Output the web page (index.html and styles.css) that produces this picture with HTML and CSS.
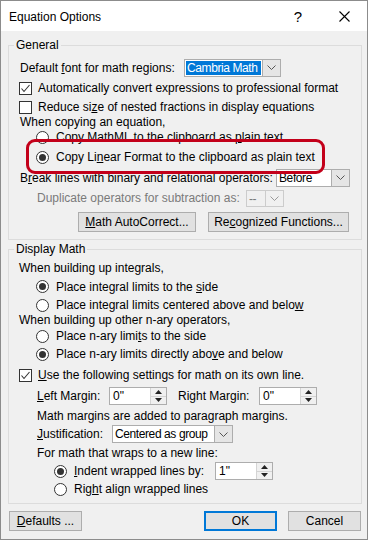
FILE: index.html
```html
<!DOCTYPE html>
<html lang="en">
<head>
    <meta charset="UTF-8">
    <title>Equation Options</title>
    <link rel="stylesheet" href="styles.css">
</head>
<body>
    <div class="dialog">
        <div class="titlebar">
            <div class="title">Equation Options</div>
            <div class="tb-btn help">?</div>
            <div class="tb-btn">
                <svg width="11" height="11" viewBox="0 0 11 11"><path d="M0.5 0.5 L10.5 10.5 M10.5 0.5 L0.5 10.5" stroke="#000" stroke-width="1.1" fill="none"/></svg>
            </div>
        </div>

        <div class="content">
            <fieldset class="group">
                <legend>General</legend>
                <div class="row h21 mt5 in11">
                    <span class="label" style="width:164px">Default <u>f</u>ont for math regions:</span>
                    <div class="combo" style="width:97px">
                        <div class="combo-value selected">Cambria Math</div>
                        <div class="combo-btn"><svg width="9" height="5" viewBox="0 0 9 5"><polyline points="0.5,0.5 4.5,4.5 8.5,0.5" fill="none" stroke="#555"/></svg></div>
                    </div>
                </div>
                <div class="row h20 in10">
                    <span class="check"><svg width="11" height="11" viewBox="0 0 11 11"><polyline points="1.5,5.5 4,8.5 9.5,2" fill="none" stroke="#333" stroke-width="1.1"/></svg></span>
                    <span>Automatically convert expressions to professional format</span>
                </div>
                <div class="row h18 in10">
                    <span class="check"></span>
                    <span>Reduce si<u>z</u>e of nested fractions in display equations</span>
                </div>
                <div class="row h12 in11">When copying an equation,</div>
                <div class="row h18 in27">
                    <span class="radio"></span>
                    <span>Copy MathML to the clipboard as <u>p</u>lain text</span>
                </div>
                <div class="row h22 in27">
                    <span class="radio on"></span>
                    <span>Copy Li<u>n</u>ear Format to the clipboard as plain text</span>
                </div>
                <div class="row h19 in11">
                    <span class="label" style="width:256px">B<u>r</u>eak lines with binary and relational operators:</span>
                    <div class="combo" style="width:74px">
                        <div class="combo-value">Before</div>
                        <div class="combo-btn"><svg width="9" height="5" viewBox="0 0 9 5"><polyline points="0.5,0.5 4.5,4.5 8.5,0.5" fill="none" stroke="#555"/></svg></div>
                    </div>
                </div>
                <div class="row h22 in28 disabled">
                    <span class="label" style="width:209px">Duplicate operators for subtraction as:</span>
                    <div class="combo off" style="width:38px">
                        <div class="combo-value">--</div>
                        <div class="combo-btn"><svg width="9" height="5" viewBox="0 0 9 5"><polyline points="0.5,0.5 4.5,4.5 8.5,0.5" fill="none" stroke="#555"/></svg></div>
                    </div>
                </div>
                <div class="row h20 mt3 buttons-row">
                    <button class="btn" style="width:118px"><u>M</u>ath AutoCorrect...</button>
                    <button class="btn" style="width:141px">Re<u>c</u>ognized Functions...</button>
                </div>
            </fieldset>

            <fieldset class="group">
                <legend>Display Math</legend>
                <div class="row h18 mt3 in10">When building up integrals,</div>
                <div class="row h19 in27">
                    <span class="radio on"></span>
                    <span>Place integral limits to the <u>s</u>ide</span>
                </div>
                <div class="row h18 in27">
                    <span class="radio"></span>
                    <span>Place integral limits centered above and belo<u>w</u></span>
                </div>
                <div class="row h12 in10">When building up other n-ary operators,</div>
                <div class="row h20 in27">
                    <span class="radio"></span>
                    <span>Place n-ary limi<u>t</u>s to the side</span>
                </div>
                <div class="row h16 in27">
                    <span class="radio on"></span>
                    <span>Place n-ary limits directly abo<u>v</u>e and below</span>
                </div>
                <div class="row h18 mt4 in10">
                    <span class="check"><svg width="11" height="11" viewBox="0 0 11 11"><polyline points="1.5,5.5 4,8.5 9.5,2" fill="none" stroke="#333" stroke-width="1.1"/></svg></span>
                    <span><u>U</u>se the following settings for math on its own line.</span>
                </div>
                <div class="row h20 mt2 in28">
                    <span class="label" style="width:72px"><u>L</u>eft Margin:</span>
                    <div class="spin">
                        <div class="spin-value">0"</div>
                        <div class="spin-btns">
                            <div class="spin-up"><svg width="7" height="4" viewBox="0 0 7 4"><polygon points="0,4 3.5,0 7,4" fill="#222"/></svg></div>
                            <div class="spin-down"><svg width="7" height="4" viewBox="0 0 7 4"><polygon points="0,0 3.5,4 7,0" fill="#222"/></svg></div>
                        </div>
                    </div>
                    <span class="label" style="width:81px;margin-left:11px">Ri<u>g</u>ht Margin:</span>
                    <div class="spin">
                        <div class="spin-value">0"</div>
                        <div class="spin-btns">
                            <div class="spin-up"><svg width="7" height="4" viewBox="0 0 7 4"><polygon points="0,4 3.5,0 7,4" fill="#222"/></svg></div>
                            <div class="spin-down"><svg width="7" height="4" viewBox="0 0 7 4"><polygon points="0,0 3.5,4 7,0" fill="#222"/></svg></div>
                        </div>
                    </div>
                </div>
                <div class="row h16 mt2 in28">Math margins are added to paragraph margins.</div>
                <div class="row h18 mt1 in28">
                    <span class="label" style="width:75px"><u>J</u>ustification:</span>
                    <div class="combo" style="width:121px">
                        <div class="combo-value">Centered as group</div>
                        <div class="combo-btn"><svg width="9" height="5" viewBox="0 0 9 5"><polyline points="0.5,0.5 4.5,4.5 8.5,0.5" fill="none" stroke="#555"/></svg></div>
                    </div>
                </div>
                <div class="row h16 mt2 in28">For math that wraps to a new line:</div>
                <div class="row h18 mt1 in45">
                    <span class="radio on"></span>
                    <span class="label" style="width:141px"><u>I</u>ndent wrapped lines by:</span>
                    <div class="spin">
                        <div class="spin-value">1"</div>
                        <div class="spin-btns">
                            <div class="spin-up"><svg width="7" height="4" viewBox="0 0 7 4"><polygon points="0,4 3.5,0 7,4" fill="#222"/></svg></div>
                            <div class="spin-down"><svg width="7" height="4" viewBox="0 0 7 4"><polygon points="0,0 3.5,4 7,0" fill="#222"/></svg></div>
                        </div>
                    </div>
                </div>
                <div class="row h14 mt2 in45">
                    <span class="radio"></span>
                    <span>Rig<u>h</u>t align wrapped lines</span>
                </div>
            </fieldset>

            <div class="footer">
                <button class="btn"><u>D</u>efaults ...</button>
                <button class="btn default push">OK</button>
                <button class="btn">Cancel</button>
            </div>
        </div>

        <div class="callout"></div>
    </div>
</body>
</html>
```

FILE: styles.css
```css
body {
    margin: 0;
    background-color: #fff;
    font-family: "Liberation Sans", Arial, sans-serif;
    font-size: 12px;
    color: #000;
}

.dialog {
    position: relative;
    width: 368px;
    height: 540px;
    box-sizing: border-box;
    border: 1px solid #8c8c8c;
    background-color: #f0f0f0;
}

.titlebar {
    height: 30px;
    background-color: #fff;
    display: flex;
    align-items: center;
}

.title {
    flex: 1;
    padding-left: 8px;
    padding-top: 2px;
}

.tb-btn {
    width: 46px;
    height: 30px;
    display: flex;
    align-items: center;
    justify-content: center;
}

.help {
    font-size: 15px;
    padding-top: 1px;
}

.content {
    padding: 7px 5px 0 7px;
}

.group {
    margin: 0;
    padding: 0 0 7px 0;
    border: 1px solid #dcdcdc;
    min-width: 0;
}

.group + .group {
    margin-top: 2px;
}

.group legend {
    margin-left: 5px;
    padding: 0 2px;
    line-height: 14px;
}

.row {
    display: flex;
    align-items: center;
    line-height: 14px;
    white-space: nowrap;
}

.h12 { height: 12px; }
.h14 { height: 14px; }
.h16 { height: 16px; }
.h18 { height: 18px; }
.h19 { height: 19px; }
.h20 { height: 20px; }
.h21 { height: 21px; }
.h22 { height: 22px; }

.mt1 { margin-top: 1px; }
.mt2 { margin-top: 2px; }
.mt3 { margin-top: 3px; }
.mt4 { margin-top: 4px; }
.mt5 { margin-top: 5px; }

.in10 { padding-left: 10px; }
.in11 { padding-left: 11px; }
.in27 { padding-left: 27px; }
.in28 { padding-left: 28px; }
.in45 { padding-left: 45px; }

.label {
    flex: none;
}

.disabled {
    color: #7a7a7a;
}

/* checkbox and radio */
.check {
    width: 13px;
    height: 13px;
    box-sizing: border-box;
    border: 1px solid #333;
    background-color: #fff;
    margin-right: 6px;
    flex: none;
    display: flex;
    align-items: center;
    justify-content: center;
}

.radio {
    width: 13px;
    height: 13px;
    box-sizing: border-box;
    border: 1px solid #333;
    border-radius: 50%;
    background-color: #fff;
    margin-right: 7px;
    flex: none;
    display: flex;
    align-items: center;
    justify-content: center;
}

.radio.on::after {
    content: "";
    width: 7px;
    height: 7px;
    border-radius: 50%;
    background-color: #333;
}

/* combo box */
.combo {
    height: 18px;
    box-sizing: border-box;
    border: 1px solid #adadad;
    background-color: #fff;
    display: flex;
    flex: none;
}

.combo-value {
    flex: 1;
    min-width: 0;
    margin: 1px;
    padding-left: 1px;
    line-height: 14px;
    letter-spacing: -0.4px;
    overflow: hidden;
}

.combo-value.selected {
    background-color: #0078d7;
    color: #fff;
}

.combo-btn {
    width: 17px;
    flex: none;
    background-color: #e5e5e5;
    border-left: 1px solid #adadad;
    display: flex;
    align-items: center;
    justify-content: center;
}

.combo.off {
    border-color: #cccccc;
    background-color: #f0f0f0;
    height: 17px;
}

.combo.off .combo-btn {
    background-color: #f0f0f0;
    border-left-color: #cccccc;
}

.combo.off polyline {
    stroke: #999;
}

/* spinner */
.spin {
    width: 58px;
    height: 18px;
    box-sizing: border-box;
    border: 1px solid #adadad;
    background-color: #fff;
    display: flex;
    flex: none;
}

.spin-value {
    flex: 1;
    padding-left: 3px;
    line-height: 16px;
}

.spin-btns {
    width: 15px;
    display: flex;
    flex-direction: column;
    border-left: 1px solid #d4d4d4;
    background-color: #f0f0f0;
}

.spin-up,
.spin-down {
    flex: 1;
    display: flex;
    align-items: center;
    justify-content: center;
}

.spin-up {
    border-bottom: 1px solid #d4d4d4;
}

/* push buttons */
.btn {
    height: 20px;
    box-sizing: border-box;
    border: 1px solid #adadad;
    background-color: #e1e1e1;
    font-family: inherit;
    font-size: 12px;
    color: #000;
    padding: 0;
    flex: none;
}

.buttons-row {
    padding-left: 69px;
    gap: 12px;
}

.footer {
    display: flex;
    margin-top: 7px;
    padding-left: 1px;
    padding-right: 1px;
}

.footer .btn {
    width: 73px;
}

.footer .btn + .btn {
    margin-left: 11px;
}

.footer .push {
    margin-left: auto !important;
}

.btn.default {
    border: 2px solid #0078d7;
}

/* red annotation over the copy options */
.callout {
    position: absolute;
    left: 25px;
    top: 138px;
    width: 299px;
    height: 35px;
    box-sizing: border-box;
    border: 3px solid #c3001a;
    border-radius: 9px;
}
```
